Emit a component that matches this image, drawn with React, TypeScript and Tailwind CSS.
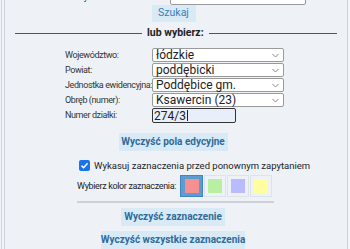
const font = { fontFamily: "Roboto, 'Liberation Sans', sans-serif" };

function Select({ value }: { value: string }) {
  return (
    <div className="flex h-[14px] w-[132px] items-center justify-between rounded-[2px] border border-[#9a9a9a] bg-white pl-[3px] pr-[4px]">
      <span className="whitespace-nowrap text-[12px] leading-none text-[#222]">{value}</span>
      <svg width="7" height="5" viewBox="0 0 7 5" className="text-[#888]">
        <path d="M0.5 1 L3.5 4 L6.5 1" fill="none" stroke="currentColor" strokeWidth="1" />
      </svg>
    </div>
  );
}

function Row({ label, children }: { label: string; children: React.ReactNode }) {
  return (
    <div className="flex items-center">
      <div className="w-[87px] whitespace-nowrap text-[9px] leading-none tracking-[-0.4px] text-[#333]">{label}</div>
      {children}
    </div>
  );
}

function Btn({ label, w }: { label: string; w: string }) {
  return (
    <div className={`flex h-[18px] items-center justify-center whitespace-nowrap bg-[#d8eaf6] text-[10px] font-bold leading-none text-[#2f6b9a] ${w}`}>
      {label}
    </div>
  );
}

const swatches = ["#f4908f", "#b8f0a2", "#babaff", "#ffffa0"];

export default function App() {
  return (
    <div className="h-[249px] w-[350px] overflow-hidden bg-[#f1f4f8]" style={font}>
      <div className="ml-[1px] h-full border-l border-[#c9d2dd]">
        <div className="ml-[2px] h-full w-[344px] overflow-hidden border-x border-[#c9d2dd] bg-[#eef2f7]">
          {/* cut-off search row */}
          <div className="-mt-[11px] flex h-[16px] items-center">
            <div className="ml-[60px] w-[105px] overflow-hidden whitespace-nowrap text-[9px] leading-none tracking-[-0.3px] text-[#333]">
              Identyfikator działki:
            </div>
            <div className="h-[16px] w-[136px] rounded-[2px] border border-[#9a9a9a] bg-white" />
          </div>
          <div className="flex justify-center pr-[3px]">
            <div className="ml-[-2px] flex h-[17px] w-[44px] items-center justify-center bg-[#d8eaf6] text-[10.5px] leading-none text-[#3a7cb4]">
              Szukaj
            </div>
          </div>

          {/* legend */}
          <div className="mt-[2px] flex items-center">
            <div className="ml-[10px] h-px w-[127px] bg-[#555]" />
            <div className="whitespace-nowrap px-[5px] text-[10.5px] font-bold leading-[18px] text-[#222]">lub wybierz:</div>
            <div className="h-px w-[128px] bg-[#555]" />
          </div>

          {/* form */}
          <div className="mt-[6px] flex flex-col gap-[1px] pl-[60px]">
            <Row label="Województwo:">
              <Select value="łódzkie" />
            </Row>
            <Row label="Powiat:">
              <Select value="poddębicki" />
            </Row>
            <Row label="Jednostka ewidencyjna:">
              <Select value="Poddębice gm." />
            </Row>
            <Row label="Obręb (numer):">
              <Select value="Ksawercin (23)" />
            </Row>
            <Row label="Numer działki:">
              <div className="flex h-[15px] w-[84px] items-center rounded-[2px] border-[1.5px] border-[#333] bg-[#e8effa] pl-[1px] text-[12px] leading-none text-[#222]">
                274/3<span className="ml-px h-[11px] w-px bg-[#222]" />
              </div>
            </Row>
          </div>

          <div className="mt-[10px] flex justify-center pr-[6px]">
            <Btn label="Wyczyść pola edycyjne" w="w-[109px]" />
          </div>

          {/* options */}
          <div className="mt-[9px] flex items-center pl-[74px]">
            <div className="flex h-[11px] w-[11px] items-center justify-center rounded-[2px] bg-[#1a73e8]">
              <svg width="9" height="9" viewBox="0 0 9 9">
                <path d="M1.5 4.6 L3.6 6.7 L7.6 2.2" fill="none" stroke="white" strokeWidth="1.6" />
              </svg>
            </div>
            <span className="ml-[4px] whitespace-nowrap text-[9.5px] leading-none text-[#222]">
              Wykasuj zaznaczenia przed ponownym zapytaniem
            </span>
          </div>
          <div className="mt-[4px] flex items-center pl-[72px]">
            <span className="w-[103px] whitespace-nowrap text-[9px] leading-none tracking-[-0.35px] text-[#222]">
              Wybierz kolor zaznaczenia:
            </span>
            <div className="flex gap-[1px]">
              {swatches.map((c, i) => (
                <div
                  key={c}
                  className={
                    i === 0
                      ? "flex h-[22px] w-[23px] items-center justify-center border border-[#3d85c6] bg-[#5d9bd0]"
                      : "flex h-[22px] w-[22px] items-center justify-center border border-[#dde3ea] bg-[#eef2f6]"
                  }
                >
                  <div className="h-[14px] w-[14px]" style={{ backgroundColor: c }} />
                </div>
              ))}
            </div>
          </div>

          <div className="mx-auto mt-[4px] h-[2px] w-[197px] -translate-x-[1px] bg-[#cdd2d8]" />

          <div className="mt-[5px] flex justify-center pr-[6px]">
            <Btn label="Wyczyść zaznaczenie" w="w-[104px]" />
          </div>
          <div className="mt-[5px] flex justify-center pr-[6px]">
            <Btn label="Wyczyść wszystkie zaznaczenia" w="w-[144px]" />
          </div>
        </div>
      </div>
    </div>
  );
}
